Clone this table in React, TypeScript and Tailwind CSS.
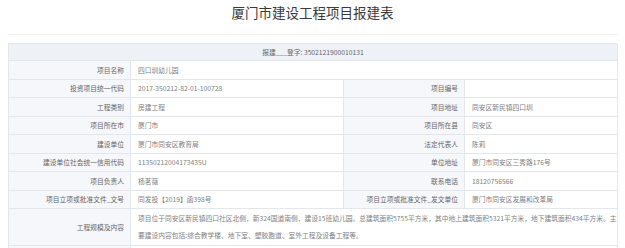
import React from "react";

const font = { fontFamily: '"Noto Sans CJK SC", "Noto Sans", sans-serif' };

function Label({ children, tall }: { children?: React.ReactNode; tall?: boolean }) {
  return (
    <div
      className={`${tall ? "h-[37px]" : "h-[18.5px]"} flex items-center justify-end pr-[6px] bg-[#f5f7fa] border-r border-b border-[#e3e7ec] text-[#666] whitespace-nowrap`}
    >
      {children}
    </div>
  );
}

function Value({ children, span3, tall }: { children?: React.ReactNode; span3?: boolean; tall?: boolean }) {
  return (
    <div
      className={`${span3 ? "col-span-3" : ""} ${tall ? "h-[37px]" : "h-[18.5px]"} flex items-center pl-[7px] bg-white border-r border-b border-[#e3e7ec] text-[#808080] whitespace-nowrap overflow-hidden`}
    >
      {children}
    </div>
  );
}

export default function App() {
  return (
    <div className="w-[625px] h-[248px] overflow-hidden bg-white px-[8px]" style={font}>
      <div className="h-[35px] border-b border-[#f0f0f0] pt-[4px] text-center text-[13.5px] leading-[17px] text-[#3a3a3a]">
        厦门市建设工程项目报建表
      </div>
      <div className="mt-[8px] grid grid-cols-[122px_213px_121px_153px] border-t border-l border-[#e3e7ec] text-[6.75px]">
        <div className="col-span-4 h-[17px] flex items-center justify-center bg-[#eef2f7] border-r border-b border-[#e3e7ec] text-[#666]">
          报建___登字: 3502121900010131
        </div>

        <Label>项目名称</Label>
        <Value span3>四口圳幼儿园</Value>

        <Label>投资项目统一代码</Label>
        <Value>2017-350212-82-01-100728</Value>
        <Label>项目编号</Label>
        <Value />

        <Label>工程类别</Label>
        <Value>房建工程</Value>
        <Label>项目地址</Label>
        <Value>同安区新民镇四口圳</Value>

        <Label>项目所在市</Label>
        <Value>厦门市</Value>
        <Label>项目所在县</Label>
        <Value>同安区</Value>

        <Label>建设单位</Label>
        <Value>厦门市同安区教育局</Value>
        <Label>法定代表人</Label>
        <Value>陈莉</Value>

        <Label>建设单位社会统一信用代码</Label>
        <Value>11350212004173435U</Value>
        <Label>单位地址</Label>
        <Value>厦门市同安区三秀路176号</Value>

        <Label>项目负责人</Label>
        <Value>杨茗薇</Value>
        <Label>联系电话</Label>
        <Value>18120756566</Value>

        <Label>项目立项或批准文件_文号</Label>
        <Value>同发投【2019】函398号</Value>
        <Label>项目立项或批准文件_发文单位</Label>
        <Value>厦门市同安区发展和改革局</Value>

        <Label tall>工程规模及内容</Label>
        <div className="col-span-3 h-[37px] flex flex-col justify-center pl-[7px] bg-white border-r border-b border-[#e3e7ec] text-[#808080] leading-[17px] whitespace-nowrap overflow-hidden">
          <span>项目位于同安区新民镇四口社区北侧，新324国道南侧，建设15班幼儿园。总建筑面积5755平方米，其中地上建筑面积5321平方米，地下建筑面积434平方米。主</span>
          <span>要建设内容包括:综合教学楼、地下室、塑胶跑道、室外工程及设备工程等。</span>
        </div>

        <Label />
        <Value span3 />
      </div>
    </div>
  );
}
